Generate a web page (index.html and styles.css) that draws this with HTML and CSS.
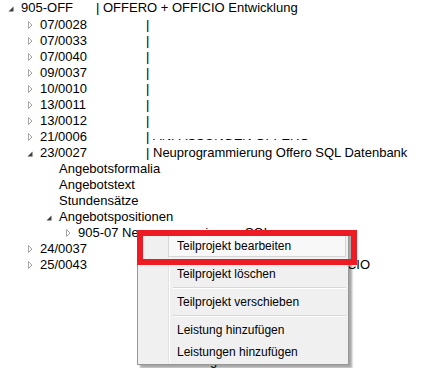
FILE: index.html
```html
<!DOCTYPE html>
<html>
<head>
<meta charset="utf-8">
<link rel="stylesheet" href="styles.css">
</head>
<body>
<div class="tree">
  <div class="row l0 first"><span class="tw"><svg viewBox="0 0 16 16" width="16" height="16"><polygon class="ex" points="11.5,6.5 11.5,11.5 6.5,11.5"/></svg></span><span class="lbl w0">905-OFF</span><span class="desc">| OFFERO + OFFICIO Entwicklung</span></div>
  <div class="row l1"><span class="tw"><svg viewBox="0 0 16 16" width="16" height="16"><polygon class="co" points="7.5,4.5 11,8 7.5,11.5"/></svg></span><span class="lbl w1">07/0028</span><span class="desc">|</span></div>
  <div class="row l1"><span class="tw"><svg viewBox="0 0 16 16" width="16" height="16"><polygon class="co" points="7.5,4.5 11,8 7.5,11.5"/></svg></span><span class="lbl w1">07/0033</span><span class="desc">|</span></div>
  <div class="row l1"><span class="tw"><svg viewBox="0 0 16 16" width="16" height="16"><polygon class="co" points="7.5,4.5 11,8 7.5,11.5"/></svg></span><span class="lbl w1">07/0040</span><span class="desc">|</span></div>
  <div class="row l1"><span class="tw"><svg viewBox="0 0 16 16" width="16" height="16"><polygon class="co" points="7.5,4.5 11,8 7.5,11.5"/></svg></span><span class="lbl w1">09/0037</span><span class="desc">|</span></div>
  <div class="row l1"><span class="tw"><svg viewBox="0 0 16 16" width="16" height="16"><polygon class="co" points="7.5,4.5 11,8 7.5,11.5"/></svg></span><span class="lbl w1">10/0010</span><span class="desc">|</span></div>
  <div class="row l1"><span class="tw"><svg viewBox="0 0 16 16" width="16" height="16"><polygon class="co" points="7.5,4.5 11,8 7.5,11.5"/></svg></span><span class="lbl w1">13/0011</span><span class="desc">|</span></div>
  <div class="row l1"><span class="tw"><svg viewBox="0 0 16 16" width="16" height="16"><polygon class="co" points="7.5,4.5 11,8 7.5,11.5"/></svg></span><span class="lbl w1">13/0012</span><span class="desc">|</span></div>
  <div class="row l1"><span class="tw"><svg viewBox="0 0 16 16" width="16" height="16"><polygon class="co" points="7.5,4.5 11,8 7.5,11.5"/></svg></span><span class="lbl w1">21/0006</span><span class="desc">| <span class="clip"><span class="clipin">ANPASSUNGEN OFFERO</span></span></span></div>
  <div class="row l1"><span class="tw"><svg viewBox="0 0 16 16" width="16" height="16"><polygon class="ex" points="11.5,6.5 11.5,11.5 6.5,11.5"/></svg></span><span class="lbl w1">23/0027</span><span class="desc">| Neuprogrammierung Offero SQL Datenbank</span></div>
  <div class="row l2"><span class="tw"></span><span class="lbl">Angebotsformalia</span></div>
  <div class="row l2"><span class="tw"></span><span class="lbl">Angebotstext</span></div>
  <div class="row l2"><span class="tw"></span><span class="lbl">Stundensätze</span></div>
  <div class="row l2"><span class="tw"><svg viewBox="0 0 16 16" width="16" height="16"><polygon class="ex" points="11.5,6.5 11.5,11.5 6.5,11.5"/></svg></span><span class="lbl">Angebotspositionen</span></div>
  <div class="row l3"><span class="tw"><svg viewBox="0 0 16 16" width="16" height="16"><polygon class="co" points="7.5,4.5 11,8 7.5,11.5"/></svg></span><span class="lbl">905-07 Neuprogrammierung SQL</span></div>
  <div class="row l1"><span class="tw"><svg viewBox="0 0 16 16" width="16" height="16"><polygon class="co" points="7.5,4.5 11,8 7.5,11.5"/></svg></span><span class="lbl w1">24/0037</span><span class="desc">| Wartung OFFERO</span></div>
  <div class="row l1"><span class="tw"><svg viewBox="0 0 16 16" width="16" height="16"><polygon class="co" points="7.5,4.5 11,8 7.5,11.5"/></svg></span><span class="lbl w1">25/0043</span><span class="desc">| Neuentwicklung OFFERO + OFFICIO</span></div>
  <div class="gap"></div>
  <div class="row far"><span class="lbl">or Bolzmanngasse</span></div>
</div>

<div class="menu">
  <div class="mi hot">Teilprojekt bearbeiten</div>
  <div class="sep"></div>
  <div class="mi">Teilprojekt löschen</div>
  <div class="sep"></div>
  <div class="mi">Teilprojekt verschieben</div>
  <div class="sep"></div>
  <div class="mi">Leistung hinzufügen</div>
  <div class="mi">Leistungen hinzufügen</div>
</div>

<div class="mark"></div>
</body>
</html>
```

FILE: styles.css
```css
html, body {
  margin: 0;
  padding: 0;
  background: #fff;
}
body {
  font-family: "Liberation Sans", Arial, sans-serif;
  font-size: 13px;
  line-height: 16px;
  color: #000;
  width: 440px;
  height: 368px;
  overflow: hidden;
  position: relative;
}
.tree {
  display: flex;
  flex-direction: column;
}
.row {
  display: flex;
  align-items: center;
  height: 16px;
  white-space: nowrap;
}
.first { margin-bottom: 1px; }
.l0 { padding-left: 2px; }
.l1 { padding-left: 21px; }
.l2 { padding-left: 40px; }
.l3 { padding-left: 59px; }
.tw {
  flex: none;
  width: 19px;
  height: 16px;
  display: flex;
}
.tw svg { display: block; }
.ex { fill: #404040; }
.co { fill: #fff; stroke: #a6a6a6; stroke-width: 1; }
.lbl { flex: none; }
.w0 { width: 75px; }
.w1 { width: 106px; }
.desc { flex: none; }
.clip {
  display: inline-block;
  height: 3px;
  overflow: hidden;
  vertical-align: -1px;
}
.clipin {
  display: block;
  margin-top: -10px;
  line-height: 13px;
}
.gap { height: 80px; flex: none; }
.far { padding-left: 137px; }

.menu {
  position: absolute;
  left: 137px;
  top: 231px;
  width: 212px;
  box-sizing: border-box;
  padding: 3px 2px 1px 2px;
  background: #f0f0f0;
  border: 1px solid #979797;
  box-shadow: 3px 3px 2px rgba(0, 0, 0, 0.35);
  font-family: "Liberation Sans", Arial, sans-serif;
  font-size: 12px;
  color: #000;
}
.menu::before {
  content: "";
  position: absolute;
  left: 30px;
  top: 2px;
  bottom: 2px;
  width: 1px;
  background: #e2e2e2;
  border-right: 1px solid #fff;
}
.mi {
  position: relative;
  height: 22px;
  display: flex;
  align-items: center;
  padding-left: 37px;
}
.hot {
  margin-left: 28px;
  padding-left: 9px;
  background: #f8f8f8;
  box-shadow: inset 0 0 0 1px #d6d6d6;
}
.sep {
  height: 6px;
  display: flex;
  flex-direction: column;
  justify-content: center;
  padding-left: 33px;
}
.sep::before {
  content: "";
  display: block;
  height: 1px;
  background: #d7d7d7;
  border-bottom: 1px solid #fff;
}
.mark {
  position: absolute;
  left: 137px;
  top: 230px;
  width: 220px;
  height: 35px;
  box-sizing: border-box;
  border: 6px solid #ed1c24;
}
```
